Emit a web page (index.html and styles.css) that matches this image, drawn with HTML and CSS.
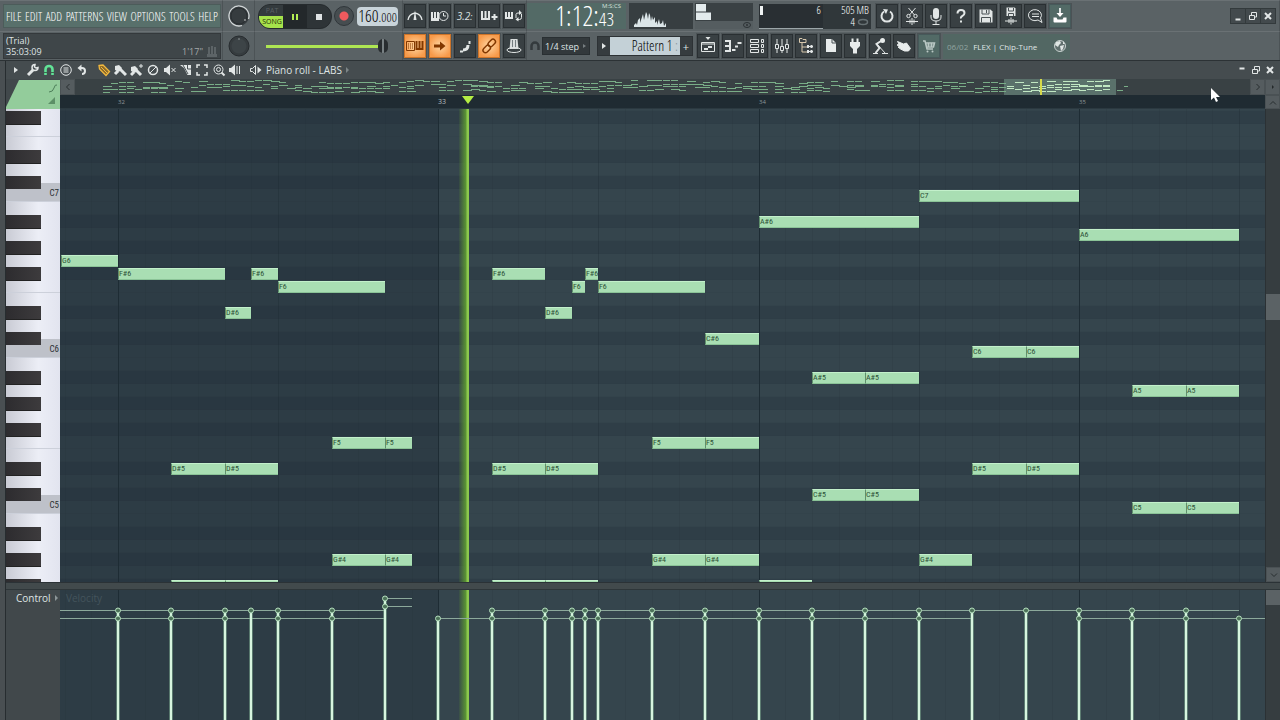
FILE: index.html
```html
<!DOCTYPE html>
<html lang="en">
<head>
<meta charset="utf-8">
<title>Piano roll - LABS</title>
<link rel="stylesheet" href="styles.css">
</head>
<body>
<header class="toolbar">
  <div class="cell cell-left">
    <nav class="menu" aria-label="Main menu">
      <button>FILE</button><button>EDIT</button><button>ADD</button><button>PATTERNS</button><button>VIEW</button><button>OPTIONS</button><button>TOOLS</button><button>HELP</button>
    </nav>
  </div>
  <div class="cell cell-knob">
    <svg class="knob" viewBox="0 0 24 24"><circle cx="12" cy="12" r="10" fill="#363c3f"/><path d="M15 21.500A10 10 0 1 1 21.500 15" fill="none" stroke="#d2d7d8" stroke-width="1.300"/><circle cx="12" cy="12" r="8" fill="none" stroke="#292e31"/><circle cx="18" cy="16" r=".8" fill="#ddd"/></svg>
  </div>
  <div class="cell cell-transport">
    <div class="transport">
      <button class="mode" aria-label="Pattern or song mode"><span class="mode-pat">PAT</span><span class="mode-song">SONG</span></button>
      <button class="play" aria-label="Pause"><svg viewBox="0 0 24 24"><path d="M10 9v6M14 9v6" stroke="#b4ee53" stroke-width="2"/></svg></button>
      <button class="stop" aria-label="Stop"><svg viewBox="0 0 24 24"><path d="M9 9h6v6H9z" fill="#dfe3e4"/></svg></button>
    </div>
    <button class="record" aria-label="Record"></button>
    <output class="tempo" aria-label="Tempo"><span>160</span><small>.000</small></output>
  </div>
  <div class="cell cell-five">
    <div class="buttons five">
      <button aria-label="Metronome"><svg viewBox="0 0 20 20"><path d="M3 14q1-6 7-7q6 1 7 7" fill="none" stroke="#e2e6e6" stroke-width="1.300"/><path d="M10 4l1.500 10h-3z" fill="#e2e6e6"/></svg></button>
      <button aria-label="Wait for input"><svg viewBox="0 0 20 20"><path d="M2 6v8h7M2 13h7M5 6v7M8 6v7" class="ln2"/><circle cx="13.500" cy="10" r="4.500" fill="#394043" stroke="#e2e6e6"/><path d="M13.500 7v3h2.500" class="ln"/></svg></button>
      <button class="countdown" aria-label="Countdown">3.2<small>:</small></button>
      <button aria-label="Blend notes"><svg viewBox="0 0 20 20"><path d="M3 5v9M6.500 5v7M10 5v9M2 13h9" class="ln2"/><path d="M12.500 11h6M15.500 8v6" class="ln2"/></svg></button>
      <button aria-label="Loop record"><svg viewBox="0 0 20 20"><path d="M2 6v7M5 6v6M8 6v7M1 12h8" class="ln2"/><path d="M12 12V8.500Q12 7 14 7h2M17.500 8v3.500q0 2-2 2h-2" class="ln"/><path d="M15 4l3 3-3 2zM14.500 11l-3 2.500 3 2z" fill="#e2e6e6"/></svg></button>
    </div>
  </div>
  <div class="cell cell-main">
    <div class="clock"><time>1:12:<small>43</small></time><span class="clock-unit">M:S:CS</span></div>
    <svg class="spectrum" viewBox="0 0 64 26"><path d="M5 24v-2l2-2 1 2 1-5 2-2v5l2-6 1-3 1 6 1-4 1-4 1 2 1 5 1-6 1 2 1 6 1-5 1 4 2-3v6l2-2v4l2-6 1 5 2-1 1-3 1 6 2-3v4z" fill="#dbe5e8"/></svg>
    <svg class="peak" viewBox="0 0 58 26"><path d="M0 18h58v8H0z" fill="#555d60"/><path d="M1 1h10v8H1zM1 9h15v8H1z" fill="#e3ebed"/><path d="M1 9h15" stroke="#3a4144"/><ellipse cx="52" cy="22" rx="3.500" ry="2.500" fill="none" stroke="#2c3235"/><circle cx="52" cy="22" r="1" fill="#2c3235"/></svg>
    <div class="cpu"><div class="cpu-load"><i></i>6</div><div class="cpu-mem"><span>505 MB</span><span>4 <svg viewBox="0 0 12 8"><ellipse cx="6" cy="4" rx="4.500" ry="2.500" fill="none" stroke="#667073" stroke-width="1.500"/></svg></span></div></div>
    <div class="buttons eight">
      <button aria-label="Undo"><svg viewBox="0 0 20 20"><path d="M7 5.500A5.500 5.500 0 1 0 13 5.500" class="ln2"/><path d="M6 3l5 .5-2 4.500z" fill="#e2e6e6"/></svg></button>
      <button aria-label="Cut"><svg viewBox="0 0 20 20"><path d="M6.500 2l6 7M13.500 2l-6 7" class="ln"/><circle cx="6.500" cy="10" r="1.700" class="ln"/><circle cx="13.500" cy="10" r="1.700" class="ln"/><path d="M4 15.500h12M8 13.500v4M10 12v7M12 13.500v4" class="ln"/></svg></button>
      <button aria-label="Record audio"><svg viewBox="0 0 20 20"><rect x="7" y="2" width="6" height="11" rx="3" fill="#e2e6e6"/><path d="M5 9v2q0 4 5 4t5-4V9M10 15v3M6.500 18.500h7" class="ln"/></svg></button>
      <button aria-label="Help"><svg viewBox="0 0 20 20"><path d="M6.500 7.500q0-3.500 3.500-3.500t3.500 3q0 1.700-2 2.800t-1.500 2.700" class="ln2"/><path d="M9 14.500h2v2H9z" fill="#e2e6e6"/></svg></button>
      <button aria-label="Save"><svg viewBox="0 0 20 20"><path d="M3.500 3.500h11l2 2v11h-13z" fill="#e2e6e6"/><path d="M6 3.500v4.500h7V3.500M5.500 16.500v-5h9v5" fill="none" stroke="#495154"/><path d="M10.500 4v3" class="dk"/></svg></button>
      <button aria-label="Save new version"><svg viewBox="0 0 20 20"><path d="M5.500 1.500h8l1 1V10h-9z" fill="#e2e6e6"/><path d="M7.500 2v3h5V2M7.500 10V7.500h5V10" fill="none" stroke="#495154"/><path d="M4 15h12M8 13v4M10 11.500v7M12 13v4" class="ln"/></svg></button>
      <button aria-label="Comments"><svg viewBox="0 0 20 20"><path d="M13 14l4 2.500-1.500-4.500A6.500 5.500 0 1 0 13 14z" class="ln"/><path d="M7 8h7M7 10.500h7" class="ln"/></svg></button>
      <button class="teal" aria-label="Download"><svg viewBox="0 0 20 20"><path d="M10 2v7" class="ln2"/><path d="M6.500 7h7L10 11z" fill="#fff"/><path d="M3.500 11.500v4q0 1 1 1h11q1 0 1-1v-4h-3l-1 2h-5l-1-2z" fill="#fff"/></svg></button>
    </div>
    <div class="window-buttons boxed">
      <button aria-label="Minimize"><svg viewBox="0 0 14 14"><path d="M4.500 10.500h5" class="ln2"/></svg></button>
      <button aria-label="Restore"><svg viewBox="0 0 14 14"><path d="M3.500 6.500h5v4h-5zM5.500 6V3.500h5V8H9" class="ln"/></svg></button>
      <button aria-label="Close"><svg viewBox="0 0 14 14"><path d="M4 4l6 6M10 4l-6 6" class="ln2"/></svg></button>
    </div>
  </div>

  <div class="cell cell-left">
    <div class="hint"><div>(Trial)</div><div class="hint-row"><span>35:03:09</span><span class="hint-len">1'17"</span><svg viewBox="0 0 10 12"><path d="M2 1v7M5 0v8M8 1v7" stroke="#5d6467" stroke-width="2"/><path d="M0 8h10v3H0z" fill="#5d6467"/></svg></div></div>
  </div>
  <div class="cell cell-knob">
    <svg class="knob" viewBox="0 0 24 24"><circle cx="12" cy="12" r="10" fill="#363c3f" stroke="#272c2f"/><circle cx="12" cy="12" r="7.500" fill="#3d4447"/><path d="M12 4v2" stroke="#8b9294"/></svg>
  </div>
  <div class="cell cell-transport"><input class="slider" type="range" min="0" max="100" value="97" aria-label="Song position"></div>
  <div class="cell cell-five">
    <div class="buttons five">
      <button class="hot" aria-label="Typing keyboard"><svg viewBox="0 0 20 20"><path d="M1.500 5.500h8v9h-8z" fill="none" stroke="#823800"/><path d="M3 8h6M3 10h6M3 12h6" fill="none" stroke="#823800" stroke-dasharray="1 1"/><path d="M11.500 5v9M14.500 5v7M17.500 5v9M11 13h7" fill="none" stroke="#823800" stroke-width="2"/></svg></button>
      <button class="hot" aria-label="Auto scroll"><svg viewBox="0 0 20 20"><path d="M4 8.500h6V5.500L15.500 10 10 14.500v-3H4z" fill="#823800"/></svg></button>
      <button aria-label="Step edit"><svg viewBox="0 0 20 20"><path d="M5 15.500h3" class="ln2"/><path d="M8 14q5 0 5-5" class="ln3"/><path d="M14.500 5v3" class="ln2"/></svg></button>
      <button class="hot" aria-label="Multilink"><svg viewBox="0 0 20 20"><g fill="none" stroke="#823800" stroke-width="1.400"><rect x="8.500" y="4.500" width="8.500" height="5" rx="2.500" transform="rotate(-45 12.700 7)"/><rect x="3.500" y="10.500" width="8.500" height="5" rx="2.500" transform="rotate(-45 7.700 13)"/></g></svg></button>
      <button aria-label="Plugin hat"><svg viewBox="0 0 20 20"><path d="M6.500 3h7l1 10h-9z" fill="#d9dddd"/><path d="M8.500 4v8M11.500 4v8" stroke="#747d80"/><ellipse cx="10" cy="14" rx="7" ry="2.500" class="ln"/></svg></button>
    </div>
  </div>
  <div class="cell cell-main">
    <svg class="magnet" viewBox="0 0 12 12"><path d="M2.500 10V6a3.500 3.500 0 0 1 7 0v4" fill="none" stroke="#343a3d" stroke-width="2.500"/></svg>
    <label class="snap"><select aria-label="Snap"><option>1/4 step</option></select></label>
    <div class="pattern"><button aria-label="Pattern menu"><svg viewBox="0 0 12 18"><path d="M4 6l4 3-4 3z" fill="#e2e6e6"/></svg></button><button class="pattern-name">Pattern 1 <span>:</span></button><button aria-label="Add pattern">+</button></div>
    <div class="buttons ten">
      <button aria-label="Playlist"><svg viewBox="0 0 20 20"><path d="M7.500 1h5L10 4z" fill="#e2e6e6"/><path d="M3.500 6.500h13v9h-13zM3.500 8h13" class="ln"/><path d="M6 13h4M10 11h4" class="ln2"/></svg></button>
      <button aria-label="Piano roll"><svg viewBox="0 0 20 20"><path d="M2 5h5M2 10h5M2 15h5M7 4v12" class="ln2"/><path d="M9 14h3.500M12 10.500h3M14.500 7h4" class="ln2"/></svg></button>
      <button aria-label="Channel rack"><svg viewBox="0 0 20 20"><path d="M3.500 3.500h8v3h-8zM3.500 8.500h8v3h-8zM3.500 13.500h8v3h-8z" class="ln"/><path d="M14.500 3.500h2v3h-2zM14.500 8.500h2v3h-2zM14.500 13.500h2v3h-2z" class="ln"/></svg></button>
      <button aria-label="Mixer"><svg viewBox="0 0 20 20"><path d="M5 3v14M10 3v14M15 3v14" class="ln"/><path d="M3.500 8.500h3v4h-3zM8.500 10.500h3v4h-3zM13.500 8.500h3v4h-3z" fill="#394043" stroke="#e2e6e6"/></svg></button>
      <button aria-label="Browser"><svg viewBox="0 0 20 20"><path d="M3.500 6.500v-4H6l1 1h3v3zM6 7v9h5M6 11h5" fill="none" stroke="#d8c8ad"/><path d="M11 10.500h6M11 15.500h6" class="ln"/><path d="M12 9v3M15.500 9v3M12 14v3M15.500 14v3" class="ln2"/></svg></button>
      <button aria-label="Plugin picker"><svg viewBox="0 0 20 20"><path d="M5 3h6l4 4v9H5z" fill="#e8ecec"/><path d="M11 3v4h4" class="dk"/></svg></button>
      <button aria-label="Plugins"><svg viewBox="0 0 20 20"><path d="M5 6h10v4l-3 3v4.500H8V13l-3-3zM6.500 2.500h2V6h-2zM11.500 2.500h2V6h-2z" fill="#e8ecec"/></svg></button>
      <button aria-label="Tempo tapper"><svg viewBox="0 0 20 20"><circle cx="12.500" cy="4.500" r="2.500" fill="#e8ecec"/><path d="M11 5L6.500 8l3 4-4 5" class="ln2"/><path d="M7 8l8 9M3 17.500h5M12 17.500h6" class="ln"/></svg></button>
      <button aria-label="Touch controllers"><svg viewBox="0 0 20 20"><path d="M3.500 5.500l6 2.500 3-1 4 5.500-2 2.500h-4l-4-2-2.500-2 2-.5-3-1.500 2-1z" fill="#e8ecec" stroke="#e8ecec"/></svg></button>
      <button class="teal" aria-label="Shop"><svg viewBox="0 0 20 20"><path d="M4 5h2l2 8h6M6.500 7h9l-1 4H8" fill="none" stroke="#bac8c5" stroke-width="1.500"/><path d="M7 9h8M9.500 7v4M12.500 7v4" stroke="#bac8c5"/><circle cx="8.500" cy="15.500" r="1" fill="#bac8c5"/><circle cx="13.500" cy="15.500" r="1" fill="#bac8c5"/></svg></button>
    </div>
    <div class="news"><span>06/02</span><b>FLEX | Chip-Tune</b><svg viewBox="0 0 14 14"><circle cx="7" cy="7" r="5.500" fill="#60706e" stroke="#c9d2d0"/><path d="M3 3l4-1 1 2-2 2-1 2-3-2zM7 7l4-1-1 4-2 2zM10 2l2 3h-2z" fill="#dfe6e4"/></svg></div>
  </div>
</header>

<main class="roll">
  <div class="titlebar">
    <div class="tools tools-main">
      <svg viewBox="0 0 14 14"><path d="M5 4l4 3-4 3z" fill="#dfe3e3"/></svg>
      <svg viewBox="0 0 14 14"><path d="M2 12l5-5" class="ln3"/><path d="M12 4.500a3 3 0 1 1-3-3L8.500 4l1.500 1z" fill="none" stroke="#e2e6e6" stroke-width="1.500"/></svg>
      <svg viewBox="0 0 14 14"><path d="M3.500 12V6.500a3.500 3.500 0 0 1 7 0V12" fill="none" stroke="#62e397" stroke-width="2.600"/><path d="M2 9.500h3M9 9.500h3" stroke="#3c6a50"/></svg>
      <svg viewBox="0 0 14 14"><circle cx="7" cy="7" r="5.300" class="ln"/><path d="M4.500 5h5M4.500 7h5M4.500 9h5" class="ln"/></svg>
      <svg viewBox="0 0 14 14"><path d="M5 5h2q3 0 3 3t-3 3" class="ln2"/><path d="M6.500 1.500v7L2.500 5z" fill="#e2e6e6"/></svg>
    </div>
    <div class="tools tools-edit">
      <svg viewBox="0 0 14 14"><path d="M2 2.500l4-.5 6.500 6.500-3.500 4L2.500 6z" fill="#8c6a2a" stroke="#f2b83e" stroke-width="1.300"/><path d="M4 4l7 7" stroke="#f2b83e"/></svg>
      <svg viewBox="0 0 14 14"><path d="M2 3l4-1 3 3-3 4-4-2z" fill="#e2e6e6"/><path d="M2 11l3-3M7 6l6 6" class="ln3"/></svg>
      <svg viewBox="0 0 14 14"><path d="M1 4l4-1 3 3-3 4-4-2z" fill="#e2e6e6"/><path d="M1 12l3-3M6 7l5 5" class="ln3"/><path d="M9 3h4M11 1v4" class="ln"/></svg>
      <svg viewBox="0 0 14 14"><circle cx="7" cy="7" r="4.500" fill="none" stroke="#e2e6e6" stroke-width="1.500"/><path d="M4 10l6-6" class="ln"/></svg>
      <svg viewBox="0 0 14 14"><path d="M1 5h2l4-3.500v11L3 9H1z" fill="#e2e6e6"/><path d="M8.500 5l4 4M12.500 5l-4 4" class="ln"/></svg>
      <svg viewBox="0 0 14 14"><path d="M1 2h11v10H8.500L5 5z" fill="#e2e6e6"/><path d="M4 2l5 9M8.500 2v4M8.500 6H12" class="dk"/></svg>
      <svg viewBox="0 0 14 14"><path d="M2 5V2h3M9 2h3v3M12 9v3H9M5 12H2V9" fill="none" stroke="#e2e6e6" stroke-width="1.500"/></svg>
      <svg viewBox="0 0 14 14"><circle cx="6.500" cy="6.500" r="4.500" class="ln"/><circle cx="6.500" cy="6.500" r="2" class="ln"/><path d="M9.500 9.500l3 3" class="ln2"/></svg>
      <svg viewBox="0 0 14 14"><path d="M1 5h2l4-3.500v11L3 9H1z" fill="#e2e6e6"/><path d="M9 3v8M11.500 3v8" class="ln"/></svg>
    </div>
    <svg viewBox="0 0 14 14" class="title-icon"><path d="M1.500 5.500h2l3-3v9l-3-3h-2z" class="ln"/><path d="M8.500 3.500L12.500 7l-4 3.500z" fill="#e2e6e6"/></svg>
    <h1>Piano roll - LABS</h1><svg class="more" viewBox="0 0 6 8"><path d="M1 1l3 3-3 3z" fill="#7d8587"/></svg>
    <div class="window-buttons">
      <button aria-label="Minimize roll"><svg viewBox="0 0 14 14"><path d="M4.500 5.500h5" class="ln2"/></svg></button>
      <button aria-label="Restore roll"><svg viewBox="0 0 14 14"><path d="M3.500 6.500h5v4h-5zM5.500 6V3.500h5V8H9" class="ln"/></svg></button>
      <button aria-label="Close roll"><svg viewBox="0 0 14 14"><path d="M4 4l6 6M10 4l-6 6" class="ln2"/></svg></button>
    </div>
  </div>
  <div class="corner"><svg viewBox="0 0 54 29"><path d="M13 0h41v29H0v-2z" fill="#93cc9b"/><path d="M43 12q4 0 5-4t3-3" fill="none" stroke="#4d7e59"/><path d="M42 24l7-7v7z" fill="#5c9067"/></svg></div>
  <div class="overview">
    <button class="side-button" aria-label="Scroll left"><svg viewBox="0 0 14 14"><path d="M8.500 4L5.500 7l3 3" class="chevron"/></svg></button>
    <div class="map"><svg id="map"></svg></div>
    <button class="side-button" aria-label="Scroll right"><svg viewBox="0 0 14 14"><path d="M5.500 4l3 3-3 3" class="chevron"/></svg></button>
  </div>
  <button class="side-button" aria-label="Overview options"><svg viewBox="0 0 14 14"><path d="M6 5l2 2-2 2z" fill="#24292b"/></svg></button>
  <div class="ruler" id="ruler"></div>
  <button class="side-button" aria-label="Scroll up"><svg viewBox="0 0 14 14"><path d="M4 8.500l3-3 3 3" class="chevron"/></svg></button>
  <div class="keys" id="keys"></div>
  <div class="lane" id="lane"></div>
  <div class="scroll"><div class="thumb"></div><button class="side-button" aria-label="Scroll down"><svg viewBox="0 0 14 14"><path d="M4 5.500l3 3 3-3" class="chevron"/></svg></button></div>
  <div class="split"></div>
  <div class="control-label">Control <svg class="more" viewBox="0 0 6 8"><path d="M1 1l3 3-3 3z" fill="#8e9698"/></svg></div>
  <div class="lane velocity" id="velocity"><span class="velocity-name">Velocity</span></div>
  <div class="scroll"><div class="control-thumb"></div></div>
</main>
<svg class="cursor" viewBox="0 0 10 15"><path d="M1 0v12l3-2.500L6 14l2-1-2-4h4z" fill="#fff"/></svg>
<script src="roll.js"></script>
</body>
</html>
```
FILE: styles.css
```css
* { box-sizing: border-box; }
body {
  margin: 0;
  height: 100vh;
  display: flex;
  flex-direction: column;
  background: #41484b;
  color: #dfe4e4;
  font-family: "Open Sans", "Noto Sans", sans-serif;
  font-size: 11px;
  overflow: hidden;
}
button { border: 0; padding: 0; margin: 0; background: none; color: inherit; font: inherit; }
svg { display: block; flex: none; }
.ln { fill: none; stroke: #e2e6e6; stroke-width: 1; }
.ln2 { fill: none; stroke: #e2e6e6; stroke-width: 2; }
.ln3 { fill: none; stroke: #e2e6e6; stroke-width: 3; }
.dk { fill: none; stroke: #495154; stroke-width: 1; }
.chevron { fill: none; stroke: #282e30; stroke-width: 1; }

.menu, .tempo, .clock, .cpu, .pattern .pattern-name {
  font-family: "Open Sans Condensed Light", "Roboto Condensed", sans-serif;
}
.note, .key { font-family: "Roboto Condensed", "Liberation Sans", sans-serif; }

.toolbar {
  flex: none;
  display: grid;
  grid-template-columns: 223px 32px 148px 124px 1fr;
  grid-template-rows: 31px 29px;
  background: #5a6265;
  border-bottom: 1px solid #2c3235;
}
.cell { display: flex; align-items: center; min-width: 0; border-top: 1px solid #6a7174; border-right: 1px solid #4c5356; }
.cell-left { padding: 0 1px 0 3px; }
.menu {
  flex: 1; height: 24px; padding: 0 2px;
  display: flex; justify-content: space-between; align-items: center;
  background: #58706b; border: 1px solid #4c5c5a;
  font-size: 12px; color: #fff;
}
.hint { flex: 1; height: 26px; padding: 1px 3px 0 2px; background: #3f4649; border: 1px solid #34393c; font-size: 9px; line-height: 11px; }
.hint-row { display: flex; gap: 4px; }
.hint-len { margin-left: auto; color: #a3a9aa; }
.hint-row svg { width: 10px; height: 12px; }
.cell-knob { justify-content: center; }
.knob { width: 24px; height: 24px; }

.cell-transport { padding-left: 3px; }
.transport { display: flex; width: 74px; height: 25px; border-radius: 12px; overflow: hidden; background: #2e3437; border: 1px solid #262b2e; }
.transport button { flex: 0 0 24px; }
.transport svg { width: 24px; height: 24px; }
.transport .play { background: #23282b; }
.mode { display: flex; flex-direction: column; background: #333a3d; font-size: 7px; line-height: 11px; }
.mode span { display: block; padding-left: 2px; text-align: center; }
.mode-pat { color: #596063; }
.mode-song { color: #1d2b09; background: #a6e34b; height: 12px; }
.record { width: 20px; height: 20px; margin: 0 3px 0 2px; border-radius: 50%; background: radial-gradient(circle, #ef5a5e 0 4px, #464d50 5px); border: 1px solid #30363a; }
.tempo { display: flex; align-items: baseline; justify-content: center; width: 41px; height: 19px; border-radius: 4px; background: #c9d4da; color: #000; font-size: 17px; line-height: 18px; }
.tempo small { font-size: 13px; }
.slider { appearance: none; width: 131px; height: 18px; margin: 0 0 0 8px; background: linear-gradient(#aee653, #aee653) left center / 118px 3px no-repeat; }
.slider::-webkit-slider-thumb { appearance: none; width: 10px; height: 14px; border-radius: 5px; background: linear-gradient(90deg, #282d30 0 4px, #798184 4px 6px, #282d30 6px); transform: translateX(-5px); }

.buttons { display: flex; justify-content: space-between; }
.five { width: 121px; margin-left: 1px; }
.eight { width: 195px; margin-left: 5px; }
.ten { width: 243px; margin-left: 4px; }
.buttons button { width: 22px; height: 24px; display: grid; place-items: center; background: #394043; border: 1px solid #292f32; box-shadow: 0 0 0 1px #4b5255; }
.buttons svg { width: 20px; height: 20px; }
.buttons .hot { background: radial-gradient(circle, #ffd7a3, #f79a4a 80%); border-color: #cd7429; }
.buttons .teal { background: #526a66; border-color: #46595a; }
.buttons .countdown { display: block; font: italic 10px/20px "Open Sans", sans-serif; }

.clock { position: relative; display: flex; justify-content: flex-end; width: 99px; height: 26px; padding-right: 12px; background: #536a66; color: #fff; font-size: 27px; line-height: 25px; white-space: nowrap; }
.clock small { font-size: 19px; }
.clock-unit { position: absolute; top: 0; right: 5px; color: #d5e0de; font: 6px/7px "Open Sans", sans-serif; }
.spectrum { width: 64px; height: 26px; margin-left: 3px; background: #373e41; }
.peak { width: 58px; height: 26px; margin-left: 2px; background: #3a4144; }
.cpu { display: flex; width: 112px; height: 25px; margin-left: 6px; background: #292f33; color: #fff; font-size: 11px; line-height: 12px; }
.cpu-load { width: 64px; padding-right: 2px; border-bottom: 1px solid #9ba5a8; display: flex; justify-content: space-between; }
.cpu-load i { width: 3px; height: 9px; margin: 2px 0 0 1px; background: #eef2f2; }
.cpu-mem { flex: 1; display: flex; flex-direction: column; align-items: flex-end; padding-right: 2px; background: #30373a; white-space: nowrap; }
.cpu-mem span { display: flex; align-items: center; gap: 2px; }
.cpu-mem svg { width: 12px; height: 8px; }
.window-buttons { display: flex; gap: 0; margin-left: auto; padding-right: 3px; }
.window-buttons svg { width: 14px; height: 14px; }
.window-buttons button { width: 14px; height: 14px; }
.boxed { gap: 1px; padding-right: 4px; }
.boxed button { background: #434a4d; box-shadow: 0 0 0 1px #333a3c; }

.magnet { width: 12px; height: 12px; margin-left: 2px; }
.snap { display: flex; align-items: center; width: 48px; height: 18px; margin-left: 1px; padding: 0 3px 0 2px; border: 1px solid #292f32; background: #33393c; }
.snap::after { content: ""; border: 2px solid transparent; border-left: 3px solid #767e80; border-right: 0; }
.snap select { appearance: none; flex: 1; min-width: 0; padding: 0; border: 0; background: none; color: #dfe4e4; font: 9px "Open Sans", sans-serif; }
.pattern { display: flex; width: 96px; height: 20px; margin-left: 7px; background: #363c3f; border: 1px solid #2d3235; }
.pattern button { flex: 0 0 12px; font-size: 11px; line-height: 17px; }
.pattern svg { width: 12px; height: 18px; }
.pattern .pattern-name { flex: 1; padding-right: 2px; text-align: right; background: #c4d1d7; color: #000; font-size: 14px; line-height: 18px; }
.pattern-name span { color: #839096; }
.news { display: flex; align-items: center; gap: 5px; width: 127px; height: 25px; margin-left: 3px; padding: 0 3px 0 4px; background: #526763; font-size: 8px; white-space: nowrap; }
.news span { color: #91a3a0; }
.news b { font-weight: 400; }
.news svg { width: 14px; height: 14px; margin-left: auto; }

.roll {
  flex: 1;
  min-height: 0;
  display: grid;
  grid-template-columns: 54px 1fr 15px;
  grid-template-rows: 18px 16px 14px minmax(0, 1fr) 8px 130px;
  padding-left: 6px;
  background: #41484b;
  box-shadow: inset 5px 0 #494f52, inset 6px 0 #272d30;
}
.titlebar { grid-column: 1 / -1; display: flex; align-items: center; padding-left: 3px; background: #454c4f; }
.tools { display: flex; justify-content: space-between; }
.tools svg, .title-icon { width: 14px; height: 14px; }
.tools-main { width: 80px; }
.tools-edit { width: 145px; margin-left: 8px; }
.title-icon { margin: 0 3px 0 7px; }
.titlebar h1 { margin: 0; font-size: 10px; font-weight: 400; line-height: 16px; }
.more { width: 6px; height: 8px; margin-left: 3px; }
.corner { grid-row: 2 / 4; }
.corner svg { width: 54px; height: 29px; margin-top: 1px; }
.overview { display: flex; min-width: 0; background: #394144; }
.side-button { width: 15px; display: grid; place-items: center; background: #555c5f; border: 1px solid #4a5154; overflow: hidden; }
.side-button svg { width: 14px; height: 14px; }
.map { flex: 1; min-width: 0; overflow: hidden; }
.map svg { width: 100%; height: 16px; }
.ruler { position: relative; grid-column: 2; overflow: hidden; background: #1f2b32; border-bottom: 1px solid #2b3940; }
.ruler span { position: absolute; top: 1px; color: #8b9497; font: 6px/12px "Open Sans", sans-serif; }
.ruler .now { color: #b5bcbd; font-size: 7px; }
.ruler svg { position: absolute; top: 1px; width: 12px; height: 9px; }

.keys { min-height: 0; overflow: hidden; background: linear-gradient(90deg, #c9cbd4, #eceef6 60%, #e2e4ef); }
.key { height: 13px; padding-right: 1px; color: #2c3034; font-size: 9px; text-align: right; }
.key-cut { height: 2px; }
.key-black::before { content: ""; display: block; width: 35px; height: 13px; background: linear-gradient(90deg, #2d2c2f, #3d3b3d); border-bottom: 1px solid #222; }
.key-c { background: #bec1c9; line-height: 8px; }
.key-f, .key-c { border-bottom: 1px solid #ccd0da; }
.key-above-c { background: linear-gradient(transparent 7px, #bec1c9 7px); }

.lane { position: relative; overflow: hidden; background: #35454d; min-width: 0; min-height: 0; }
.row { height: 13px; border-bottom: 1px solid #33434b; }
.row-cut { height: 2px; }
.row-black { background: #2f3e47; border-bottom-color: #2e3d46; }
.shade { position: absolute; inset: 0 auto 0 0; background: rgba(31, 44, 54, 0.35); }
.line { position: absolute; top: 0; bottom: 0; width: 1px; background: rgba(31, 44, 52, 0.15); }
.line-half { background: rgba(22, 34, 42, 0.25); }
.line-bar { background: #1e2c34; }
.note { position: absolute; height: 12px; overflow: hidden; background: #a9deb3; border-top: 1px solid #c3f0cb; border-left: 1px solid #5f8f6c; border-bottom: 1px solid #8bc397; color: #2d5237; font-size: 8px; line-height: 10px; white-space: nowrap; }
.playhead { position: absolute; top: 0; bottom: 0; width: 10px; background: linear-gradient(90deg, rgba(90, 150, 40, 0.1), #5b9434 70%, #8cc84e 80%); }

.scroll { display: flex; flex-direction: column; min-height: 0; background: #363d40; border-left: 1px solid #2b3134; }
.scroll .thumb { height: 26px; margin-top: 185px; background: #5b6265; }
.scroll .side-button { height: 15px; margin-top: auto; }
.control-thumb { height: 15px; background: #5b6265; }
.split { grid-column: 1 / -1; background: #424a4c; border-bottom: 1px solid #2e3639; border-top: 1px solid #2b3236; }
.control-label { display: flex; align-items: center; align-self: start; padding-left: 10px; font-size: 10px; line-height: 16px; white-space: nowrap; }
.velocity-name { position: absolute; z-index: 1; left: 6px; top: 0; color: #44545c; font-size: 10px; line-height: 16px; }
.velocity svg { position: absolute; left: 0; top: 0; width: 100%; height: 100%; }
.velocity-line { stroke: #8ca99b; stroke-width: 1; }
.stem { stroke: #d7f5df; stroke-width: 2; }
.stem-edge { stroke: #86b597; stroke-width: 3; }
.dot { fill: #4c7259; stroke: #b5dfbe; stroke-width: 1; }
.cursor { position: absolute; left: 1210px; top: 88px; width: 10px; height: 15px; }
```
FILE: roll.js
```js
// Time runs in 24 units per bar; the lane opens 58px before bar 32.
const ORIGIN = 58;
const BAR = 320.3;
const x = (t) => Math.round(ORIGIN + (t * BAR) / 24);
const NAMES = ["C", "C#", "D", "D#", "E", "F", "F#", "G", "G#", "A", "A#", "B"];
const TOP = 7 * 12 + 6;
const PLAYHEAD = 399;

const NOTES = [
  ["G6", -4.3, 4.3], ["F#6", 0, 8], ["D#6", 8, 2], ["F#6", 10, 2], ["F6", 12, 8],
  ["D#5", 4, 4], ["D#5", 8, 4], ["F5", 16, 4], ["F5", 20, 2], ["G#4", 16, 4], ["G#4", 20, 2],
  ["", 4, 4], ["", 8, 4],
  ["F#6", 28, 4], ["D#6", 32, 2], ["F6", 34, 1], ["F#6", 35, 1], ["F6", 36, 8], ["C#6", 44, 4],
  ["D#5", 28, 4], ["D#5", 32, 4], ["F5", 40, 4], ["F5", 44, 4], ["G#4", 40, 4], ["G#4", 44, 4],
  ["", 28, 4], ["", 32, 4], ["", 48, 4],
  ["A#6", 48, 12], ["C7", 60, 12], ["A6", 72, 12], ["A#5", 52, 4], ["A#5", 56, 4],
  ["C#5", 52, 4], ["C#5", 56, 4], ["C6", 64, 4], ["C6", 68, 4], ["D#5", 64, 4], ["D#5", 68, 4],
  ["G#4", 60, 4], ["A5", 76, 4], ["A5", 80, 4], ["C5", 76, 4], ["C5", 80, 4],
];
// Notes on the row at the lower edge carry no label.
const EDGE_PITCH = 4 * 12 + 6;

function add(parent, className, text) {
  const el = document.createElement("div");
  el.className = className;
  if (text) el.textContent = text;
  parent.append(el);
  return el;
}

const lane = document.getElementById("lane");
const keys = document.getElementById("keys");
const velocity = document.getElementById("velocity");
const ruler = document.getElementById("ruler");

add(keys, "key key-cut");
add(lane, "row row-cut");
for (let i = 0; i < 37; i++) {
  const pitch = TOP - i;
  const name = NAMES[pitch % 12];
  const black = name.length === 2;
  let kind = "key";
  if (black) kind += " key-black";
  if (name === "C") kind += " key-c";
  if (name === "F") kind += " key-f";
  if (name === "C#") kind += " key-above-c";
  add(keys, kind, name === "C" ? "C" + Math.floor(pitch / 12) : "");
  add(lane, black ? "row row-black" : "row");
}

for (const area of [lane, velocity]) {
  add(area, "shade").style.width = x(24) + "px";
  for (let t = -4; t < 92; t += 2) {
    const kind = t % 24 === 0 ? "line line-bar" : t % 12 === 0 ? "line line-half" : "line";
    add(area, kind).style.left = x(t) + "px";
  }
  add(area, "playhead").style.left = PLAYHEAD + "px";
}

for (const [name, start, length] of NOTES) {
  const pitch = name ? NAMES.indexOf(name.slice(0, -1)) + 12 * Number(name.slice(-1)) : EDGE_PITCH;
  const note = add(lane, "note", name);
  note.style.left = x(start) + "px";
  note.style.width = x(start + length) - x(start) + "px";
  note.style.top = 3 + (TOP - pitch) * 13 + "px";
}

for (let bar = 32; bar < 36; bar++) {
  const label = document.createElement("span");
  label.textContent = bar;
  if (bar === 33) label.className = "now";
  label.style.left = x((bar - 32) * 24) + "px";
  ruler.append(label);
}
ruler.insertAdjacentHTML("beforeend",
  `<svg viewBox="0 0 12 9" style="left:${PLAYHEAD + 3}px"><path d="M0 0h12L6 8z" fill="#b5ee44"/></svg>`);

// Velocity values, as pixels from the top of the control lane.
const HIGH = 20, LOW = 28;
const EVENTS = [0, 4, 8, 10, 12, 16, 20, 24, 28, 32, 34, 35, 36, 40, 44, 48, 52, 56, 60, 64, 68, 72, 76, 80, 84];
const SINGLE = { 10: HIGH, 24: LOW, 64: HIGH, 68: HIGH, 84: LOW };
const LEVELS = [[-5, 20, HIGH], [-5, 20, LOW], [20, 22, 8], [20, 22, 16], [24, 64, LOW], [28, 84, HIGH], [72, 90, LOW]];
let art = "";
for (const [from, to, y] of LEVELS) {
  art += `<path class="velocity-line" d="M${x(from)} ${y + 0.5}H${x(to)}"/>`;
}
for (const t of EVENTS) {
  const dots = t === 20 ? [8, 16] : SINGLE[t] ? [SINGLE[t]] : [HIGH, LOW];
  for (const kind of ["stem-edge", "stem"]) {
    art += `<path class="${kind}" d="M${x(t)} ${dots[0] + 2}V400"/>`;
  }
  for (const y of dots) art += `<circle class="dot" cx="${x(t)}" cy="${y + 0.5}" r="2.5"/>`;
}
velocity.insertAdjacentHTML("beforeend", `<svg>${art}</svg>`);

// Miniature of the whole score.
let map = '<path d="M929 0h112v16H929z" fill="#5a716b"/>';
let seed = 7;
const random = () => (seed = (seed * 16807) % 2147483647) / 2147483647;
for (let px = 28; px < 1036; px += 8) {
  const color = px > 928 ? "#c1e8c3" : "#79ad87";
  const drift = Math.round(Math.sin(px / 34));
  for (const base of [3, 7, 9, 12]) {
    if (random() < 0.3) continue;
    const y = base + drift + (random() < 0.5 ? 0 : 1) - 0.5;
    map += `<path d="M${px} ${y}h${random() < 0.4 ? 9 : 7}" stroke="${color}"/>`;
  }
}
map += '<path d="M1042 11.500h6M1049 7.500h4" stroke="#79ad87"/><path d="M966 0v16" stroke="#d6d84a" stroke-width="2"/>';
document.getElementById("map").innerHTML = map;
```
